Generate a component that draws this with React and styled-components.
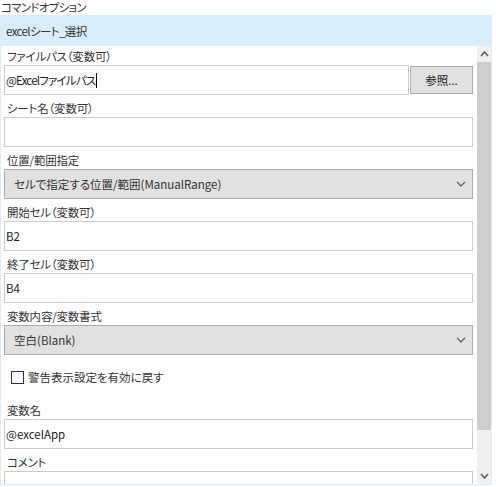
import React from 'react';
import styled, { createGlobalStyle } from 'styled-components';

const GlobalStyle = createGlobalStyle`
  body {
    margin: 0;
    background: #fff;
    font-family: "Noto Sans CJK JP", "Noto Sans", sans-serif;
    font-feature-settings: "palt";
    font-size: 11.5px;
    color: #333;
  }
`;

const Page = styled.div`
  width: 496px;
  height: 487px;
  overflow: hidden;
`;

const Title = styled.div`
  height: 15px;
  line-height: 15px;
  padding-left: 1px;
  letter-spacing: -0.7px;
  color: #333;
`;

const Panel = styled.div`
  width: 490px;
  height: 469px;
  border: 1px solid #d8eefa;
  border-top: none;
  display: flex;
  flex-direction: column;
  overflow: hidden;
`;

const Header = styled.div`
  height: 31px;
  margin: 0 -1px;
  background: #d7eefa;
  display: flex;
  align-items: center;
  padding-left: 6px;
  letter-spacing: -0.6px;
  color: #333;
`;

const Body = styled.div`
  flex: 1;
  display: flex;
  min-height: 0;
`;

const Form = styled.div`
  flex: 1;
  padding: 1px 4px 0 3px;
  overflow: hidden;
`;

const Field = styled.div`
  margin-bottom: 4px;
`;

const Label = styled.div`
  height: 18px;
  display: flex;
  align-items: center;
  padding-left: 3px;
  letter-spacing: -0.2px;
  color: #333;
`;

const InputRow = styled.div`
  display: flex;
  gap: 1px;
`;

const TextBox = styled.div`
  flex: 1;
  height: 28px;
  border: 1px solid #cbcbcb;
  background: #fff;
  display: flex;
  align-items: center;
  padding-left: 1px;
  letter-spacing: ${(p) => (p.$tight ? '-0.8px' : '0')};
  color: #222;
`;

const Caret = styled.span`
  display: inline-block;
  width: 1px;
  height: 15px;
  background: #000;
  margin-left: 1px;
`;

const BrowseButton = styled.div`
  width: 61px;
  height: 26px;
  margin: 1px 0;
  border: 1px solid #adadad;
  background: #e1e1e1;
  display: flex;
  align-items: center;
  justify-content: center;
  color: #222;
`;

const Select = styled.div`
  height: 28px;
  border: 1px solid #adadad;
  background: #e1e1e1;
  display: flex;
  align-items: center;
  justify-content: space-between;
  padding: 0 6px 0 9px;
  color: #333;
`;

const CheckRow = styled.div`
  height: 42px;
  display: flex;
  align-items: center;
  gap: 4px;
  padding: 0 0 6px 7px;
  box-sizing: border-box;
  color: #333;
`;

const Box = styled.span`
  width: 11px;
  height: 11px;
  border: 1px solid #333;
  background: #fff;
`;

const ScrollBar = styled.div`
  width: 14px;
  display: flex;
  flex-direction: column;
  background: #f0f0f0;
`;

const Arrow = styled.div`
  height: 16px;
  display: flex;
  align-items: center;
  justify-content: center;
`;

const Thumb = styled.div`
  height: 368px;
  background: #cdcdcd;
`;

const Track = styled.div`
  flex: 1;
`;

const Chevron = ({ up, color = '#606060', w = 7, h = 4, sw = 1.6 }) => (
  <svg width={w + 2} height={h + 2} viewBox={`0 0 ${w + 2} ${h + 2}`}>
    <polyline
      points={up ? `1,${h + 1} ${(w + 2) / 2},1 ${w + 1},${h + 1}` : `1,1 ${(w + 2) / 2},${h + 1} ${w + 1},1`}
      fill="none"
      stroke={color}
      strokeWidth={sw}
    />
  </svg>
);

const TextField = ({ label, value }) => (
  <Field>
    <Label>{label}</Label>
    <TextBox>{value}</TextBox>
  </Field>
);

const SelectField = ({ label, value }) => (
  <Field>
    <Label>{label}</Label>
    <Select>
      <span>{value}</span>
      <Chevron w={8} h={4} sw={1.1} color="#555" />
    </Select>
  </Field>
);

export default function App() {
  return (
    <Page>
      <GlobalStyle />
      <Title>コマンドオプション</Title>
      <Panel>
        <Header>excelシート_選択</Header>
        <Body>
          <Form>
            <Field>
              <Label>ファイルパス（変数可）</Label>
              <InputRow>
                <TextBox $tight>
                  @Excelファイルパス
                  <Caret />
                </TextBox>
                <BrowseButton>参照...</BrowseButton>
              </InputRow>
            </Field>
            <TextField label="シート名（変数可）" value="" />
            <SelectField label="位置/範囲指定" value="セルで指定する位置/範囲(ManualRange)" />
            <TextField label="開始セル（変数可）" value="B2" />
            <TextField label="終了セル（変数可）" value="B4" />
            <SelectField label="変数内容/変数書式" value="空白(Blank)" />
            <CheckRow>
              <Box />
              <span>警告表示設定を有効に戻す</span>
            </CheckRow>
            <TextField label="変数名" value="@excelApp" />
            <TextField label="コメント" value="" />
          </Form>
          <ScrollBar>
            <Arrow>
              <Chevron up />
            </Arrow>
            <Thumb />
            <Track />
            <Arrow>
              <Chevron />
            </Arrow>
          </ScrollBar>
        </Body>
      </Panel>
    </Page>
  );
}
